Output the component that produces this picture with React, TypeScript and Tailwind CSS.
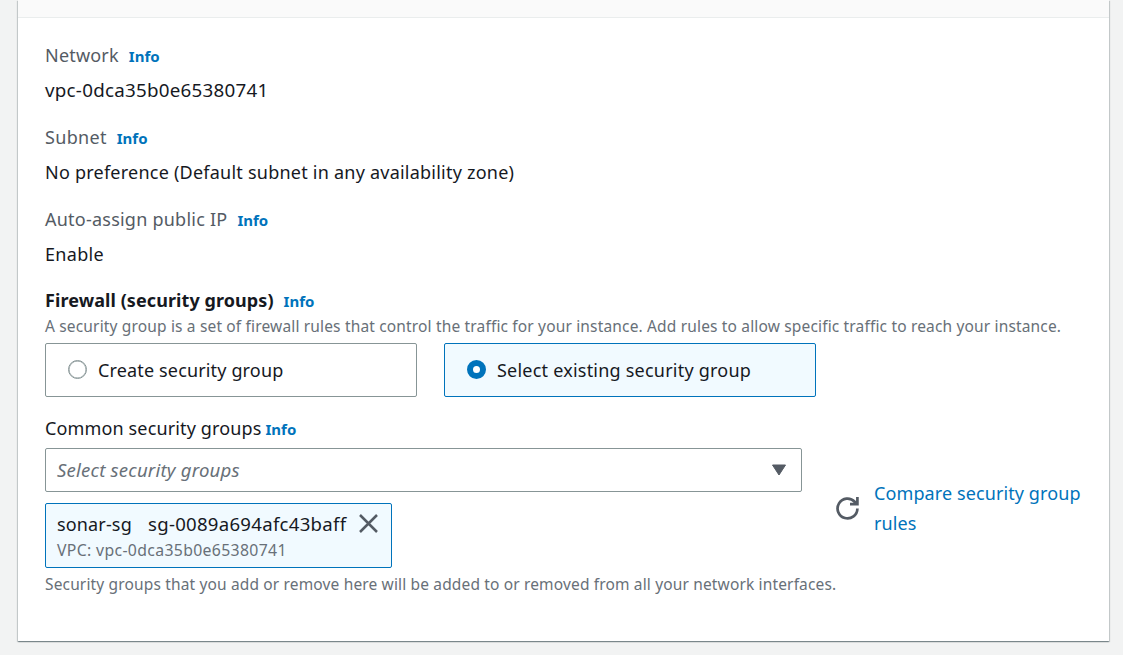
import React from "react";

function Info({ className = "ml-[10px]" }: { className?: string }) {
  return (
    <a href="#" className={`text-[15px] font-bold text-[#0073bb] ${className}`}>
      Info
    </a>
  );
}

function Field({ label, labelClass, value, valueClass }: { label: string; labelClass: string; value: string; valueClass: string }) {
  return (
    <div className="mb-[17px] h-[65px]">
      <div className="flex h-[30px] items-baseline whitespace-nowrap">
        <span className={`text-[#545b64] ${labelClass}`}>{label}</span>
        <Info />
      </div>
      <div className="mt-[5px] flex h-[30px] whitespace-nowrap">
        <span className={valueClass}>{value}</span>
      </div>
    </div>
  );
}

export default function App() {
  return (
    <div className="h-[655px] overflow-hidden bg-[#f2f3f3] pr-[14px] pl-[18px] font-['Noto_Sans',sans-serif] text-[18px] leading-[30px] text-[#16191f]">
      <div className="flex h-[641px] flex-col bg-white shadow-[0_1px_1px_0_rgba(0,28,36,0.3),1px_1px_1px_0_rgba(0,28,36,0.15),-1px_1px_1px_0_rgba(0,28,36,0.15)]">
        <div className="h-[18px] shrink-0 border-b border-[#eaeded] bg-[#fafafa]" />
        <div className="pt-[22px] pl-[27px]">
          <Field label="Network" labelClass="tracking-[0.2px]" value="vpc-0dca35b0e65380741" valueClass="text-[18.8px] tracking-[0.25px]" />
          <Field label="Subnet" labelClass="tracking-[0.32px]" value="No preference (Default subnet in any availability zone)" valueClass="tracking-[0.23px]" />
          <Field label="Auto-assign public IP" labelClass="tracking-[0.23px]" value="Enable" valueClass="tracking-[0.3px]" />

          <div className="-mt-px flex h-[30px] items-baseline whitespace-nowrap">
            <span className="font-bold tracking-[0.08px]">Firewall (security groups)</span>
            <Info />
          </div>
          <p className="mb-px h-[27px] whitespace-nowrap text-[15.5px] leading-[22px] tracking-[0.16px] text-[#687078]">
            A security group is a set of firewall rules that control the traffic for your instance. Add rules to allow specific traffic to reach your instance.
          </p>
          <div className="flex gap-[27px]">
            <label className="flex h-[54px] w-[372px] items-center rounded-[2px] border border-[#879596] pl-[22px]">
              <span className="-mt-[2px] size-[19px] rounded-full border border-[#879596] bg-white shadow-[inset_0_0_0_0.5px_#879596]" />
              <span className="ml-[11px] tracking-[0.15px]">Create security group</span>
            </label>
            <label className="flex h-[54px] w-[372px] items-center rounded-[2px] border border-[#0073bb] bg-[#f1faff] pl-[22px]">
              <span className="-mt-[2px] size-[19px] rounded-full border-[6px] border-[#0073bb] bg-white" />
              <span className="ml-[11px] tracking-[0.22px]">Select existing security group</span>
            </label>
          </div>

          <div className="mt-[16px] flex">
            <div className="w-[757px]">
              <div className="flex h-[35px] items-baseline whitespace-nowrap">
                <span className="tracking-[0.14px]">Common security groups</span>
                <Info className="ml-[4px]" />
              </div>
              <div className="flex h-[44px] items-center justify-between rounded-[2px] border border-[#879596] pr-[14px] pl-[11px]">
                <span className="text-[18.6px] tracking-[0.2px] text-[#687078] italic">Select security groups</span>
                <svg width="16" height="12" viewBox="0 0 16 12" fill="#545b64" stroke="#545b64" strokeWidth="1" strokeLinejoin="round">
                  <path d="M1.5 1h13L8 11z" />
                </svg>
              </div>
              <div className="mt-[11px] flex h-[65px] w-[347px] justify-between rounded-[2px] border border-[#0073bb] bg-[#f1faff] pt-[5px] pr-[13px] pl-[11px]">
                <div className="whitespace-nowrap">
                  <div className="flex h-[30px]">
                    <span className="w-[91px] tracking-[0.15px]">sonar-sg</span>
                    <span className="text-[18.6px] tracking-[0.27px]">sg-0089a694afc43baff</span>
                  </div>
                  <div className="text-[15.8px] leading-[22px] tracking-[0.34px] text-[#687078]">VPC: vpc-0dca35b0e65380741</div>
                </div>
                <svg className="mt-[5px]" width="19" height="19" viewBox="0 0 19 19" fill="none" stroke="#545b64" strokeWidth="2.5">
                  <path d="M1 1l17 17M18 1L1 18" />
                </svg>
              </div>
              <p className="mt-[5px] whitespace-nowrap text-[15.5px] leading-[22px] tracking-[0.15px] text-[#687078]">
                Security groups that you add or remove here will be added to or removed from all your network interfaces.
              </p>
            </div>
            <svg className="mt-[84px] ml-[34px]" width="23" height="23" viewBox="0 0 23 23" fill="none" stroke="#545b64" strokeWidth="2.7">
              <path d="M21.4 11.5a9.9 9.9 0 1 1-2.7-6.8l1.8 2M21.4 0v7.2h-7.4" />
            </svg>
            <a href="#" className="mt-[65px] ml-[15px] w-[220px] tracking-[0.1px] text-[#0073bb]">
              Compare security group rules
            </a>
          </div>
        </div>
      </div>
    </div>
  );
}
